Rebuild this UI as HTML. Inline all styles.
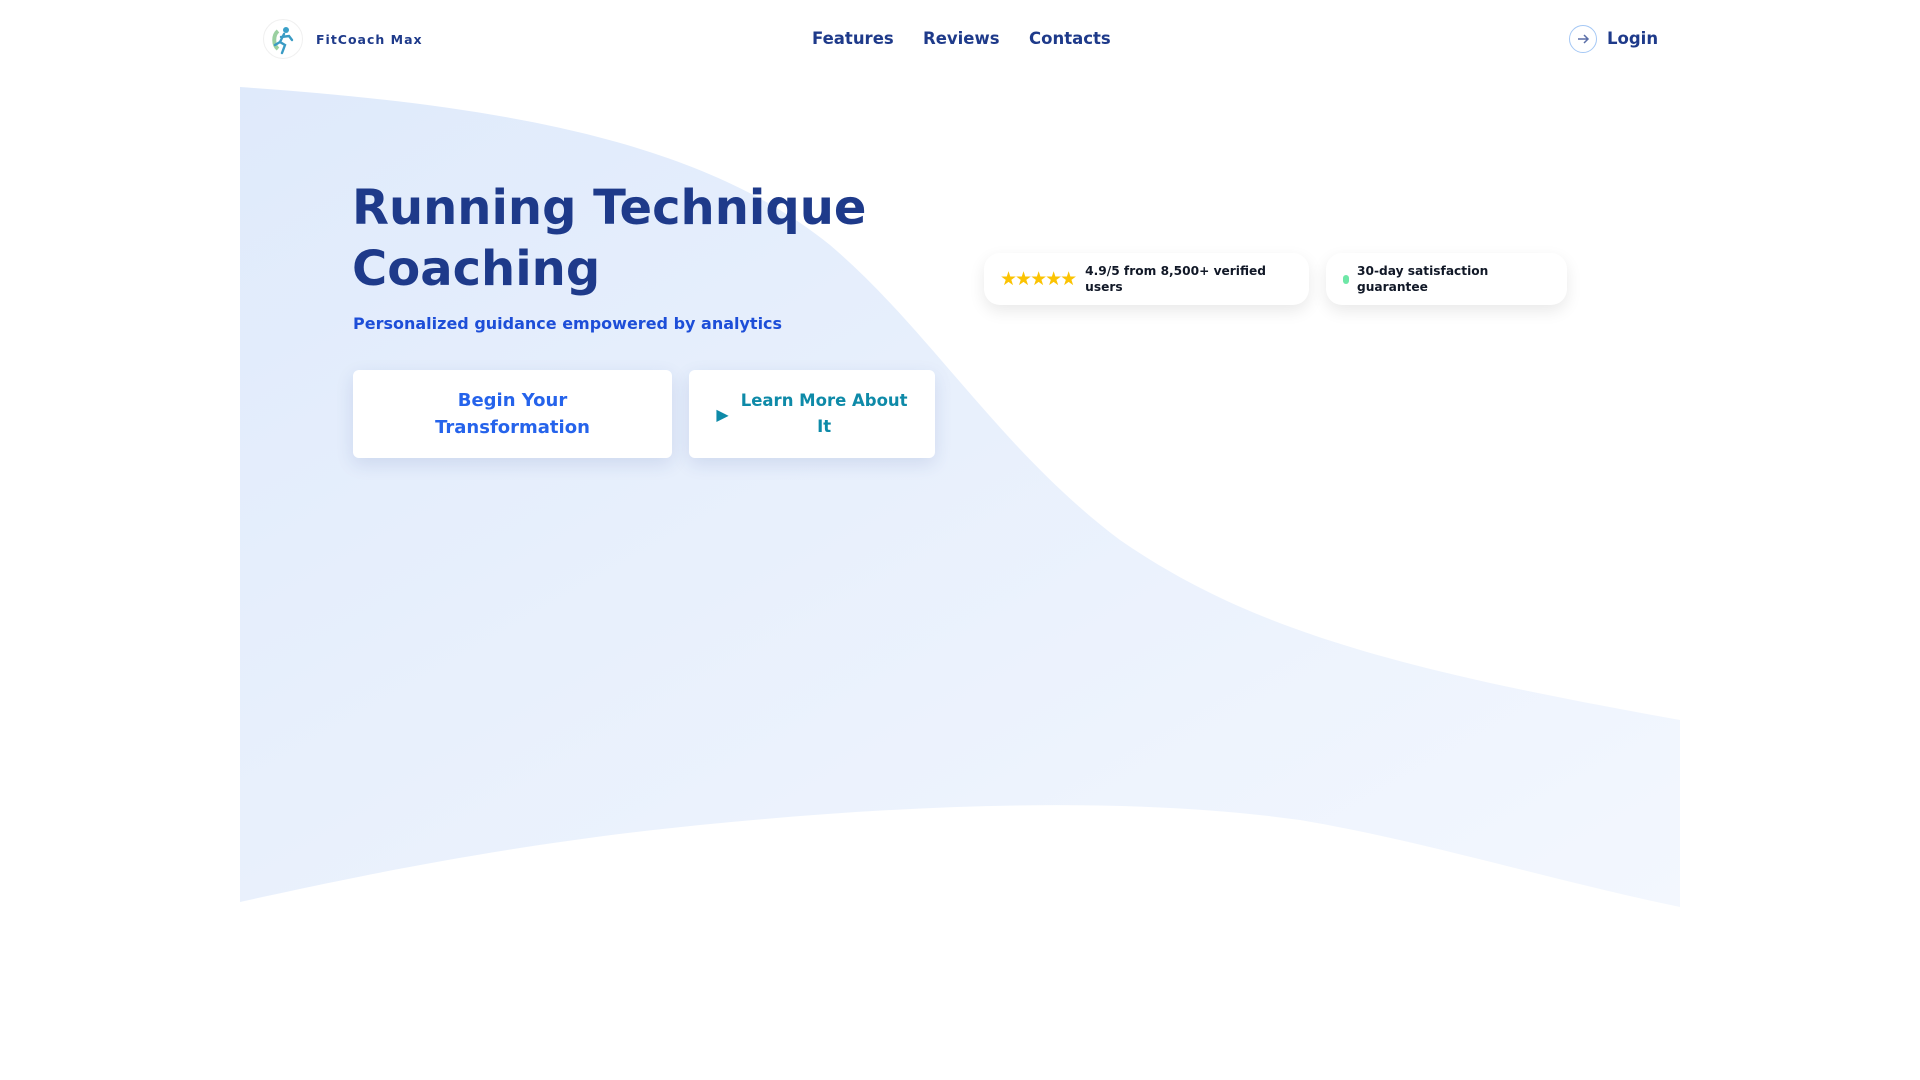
<!DOCTYPE html>
<html><head><meta charset="utf-8"><style>
*{margin:0;padding:0;box-sizing:border-box}
body{width:1920px;height:1080px;background:#fff;font-family:"DejaVu Sans","Liberation Sans",sans-serif;position:relative;overflow:hidden}
.abs{position:absolute}
.nav a{position:absolute;top:29px;font-size:16.5px;font-weight:bold;color:#1e3a8a;text-decoration:none}
h1{position:absolute;left:352px;top:178px;font-size:48px;line-height:61px;color:#1e3a8a;font-weight:bold}
.sub{left:353px;top:314px;font-size:16px;font-weight:bold;color:#1d4ed8}
.btn{position:absolute;top:370px;height:88px;background:#fff;border-radius:6px;box-shadow:0 6px 18px rgba(30,58,138,.12);font-weight:bold;line-height:27px;text-align:center;display:flex;align-items:center;justify-content:center}
.badge{position:absolute;top:253px;height:52px;background:#fff;border-radius:16px;box-shadow:0 6px 16px rgba(0,0,0,.09);font-size:12.2px;font-weight:bold;color:#111827;line-height:16px;display:flex;align-items:center}
</style></head><body>
<svg class="abs" style="left:0;top:0" width="1920" height="1080">
<defs><linearGradient id="g" x1="0" y1="0" x2="1" y2="1"><stop offset="0" stop-color="#dfeafb"/><stop offset="1" stop-color="#f3f7fe"/></linearGradient></defs>
<path d="M240 87 C500 105 700 140 830 245 C930 330 1000 450 1120 540 C1250 630 1400 670 1680 720 L1680 907 C1550 880 1420 840 1300 820 C1120 795 900 805 700 825 C500 845 340 880 240 902 Z" fill="url(#g)"/>
</svg>
<div class="abs" style="left:263px;top:19px;width:40px;height:40px;border-radius:50%;border:1px solid #f0f0f0;background:#fff"></div>
<svg class="abs" style="left:270px;top:25px" width="26" height="30" viewBox="0 0 26 30"><path d="M8 6 C3 10 3 20 8 24" stroke="#9ad0a0" stroke-width="4" fill="none"/><circle cx="16" cy="5" r="3" fill="#3aa0c8"/><path d="M14 9 L10 17 L15 20 L12 28 M11 12 L19 11 L22 15 M10 17 L5 20" stroke="#3a9bc4" stroke-width="2.4" fill="none" stroke-linecap="round"/></svg>
<div class="abs" style="left:316px;top:32px;font-size:12.5px;font-weight:bold;color:#1e3a8a;letter-spacing:1px">FitCoach Max</div>
<div class="nav"><a style="left:812px">Features</a><a style="left:923px">Reviews</a><a style="left:1029px">Contacts</a></div>
<div class="abs" style="left:1569px;top:25px;width:28px;height:28px;border-radius:50%;border:1.5px solid #a5c8f5"></div>
<svg class="abs" style="left:1576px;top:32px" width="14" height="14" viewBox="0 0 14 14"><path d="M2 7 H12 M8 3 L12 7 L8 11" stroke="#5b6fa8" stroke-width="1.5" fill="none"/></svg>
<div class="abs" style="left:1607px;top:29px;font-size:16.5px;font-weight:bold;color:#1e3a8a">Login</div>
<h1>Running Technique<br>Coaching</h1>
<div class="abs sub">Personalized guidance empowered by analytics</div>
<div class="btn" style="left:353px;width:319px;color:#2563eb;font-size:18px">Begin Your<br>Transformation</div>
<div class="btn" style="left:689px;width:246px;color:#0e8aa8"><span style="font-size:16px;margin-right:12px">▶</span><span style="font-size:16.5px;line-height:26px">Learn More About<br>It</span></div>
<div class="badge" style="left:984px;width:325px;padding-left:16px"><span style="color:#fbc302;font-size:19px;letter-spacing:-2px;margin-right:10px">★★★★★</span><span>4.9/5 from 8,500+ verified<br>users</span></div>
<div class="badge" style="left:1326px;width:241px;padding-left:17px"><span style="width:6px;height:9px;border-radius:3px;background:#6ee7a7;margin-right:8px;display:inline-block"></span><span>30-day satisfaction<br>guarantee</span></div>
</body></html>
